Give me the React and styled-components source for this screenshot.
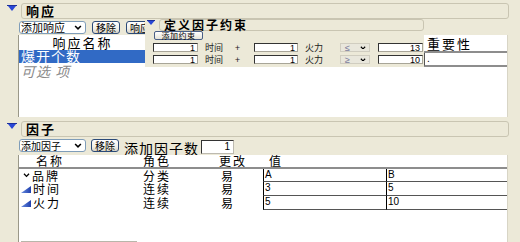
import React from 'react';
import styled, { createGlobalStyle } from 'styled-components';

const GlobalStyle = createGlobalStyle`
  html, body {
    margin: 0;
    padding: 0;
    background: #ECE9D8;
  }
  body {
    font-family: "Liberation Sans", "Noto Sans CJK SC", sans-serif;
    color: #000;
  }
`;

const cjk = `"Noto Sans CJK SC", "Liberation Sans", sans-serif`;

const Page = styled.div`
    position: relative;
    width: 520px;
    height: 242px;
    overflow: hidden;
    background: #ECE9D8;
    padding-top: 3px;
    box-sizing: border-box;
`;

const Section = styled.section`
    display: flex;
    flex-direction: column;
    margin-top: ${p => p.$top || 0}px;
`;

const HeaderRow = styled.div`
    display: flex;
    align-items: flex-start;
    padding-left: ${p => p.$indent || 7}px;
`;

const HeaderBox = styled.div`
    margin-left: 4px;
    width: ${p => p.$w}px;
    height: ${p => p.$h || 16}px;
    box-sizing: border-box;
    border: 1px solid #c9c5b2;
    border-radius: 3px;
    background: #ECE9D8;
    padding-left: 4px;
    font-family: ${cjk};
    font-weight: bold;
    font-size: ${p => p.$fs || 13}px;
    letter-spacing: 2px;
    line-height: ${p => (p.$h || 16) - 2}px;
`;

const Toolbar = styled.div`
    display: flex;
    align-items: flex-start;
    height: 13px;
    margin: 2px 0 0 19px;
`;

const Combo = styled.div`
    display: flex;
    align-items: center;
    justify-content: space-between;
    width: ${p => p.$w}px;
    height: 13px;
    box-sizing: border-box;
    border: 1px solid #7F9DB9;
    border-radius: 3px;
    background: #fff;
    padding: 0 3px 0 1px;
    font-family: ${cjk};
    font-size: ${p => p.$fs || 11}px;
    line-height: 11px;
    margin-right: ${p => p.$mr || 0}px;
    flex-shrink: 0;
`;

const Btn = styled.div`
    height: 13px;
    box-sizing: border-box;
    border: 1px solid #2b4a78;
    border-radius: 3px;
    background: linear-gradient(#ffffff, #f0efe8 60%, #d8d3c6);
    padding: 0 3px;
    font-family: ${cjk};
    font-size: ${p => p.$fs || 10}px;
    line-height: 11px;
    margin-right: ${p => p.$mr || 0}px;
    white-space: nowrap;
    flex-shrink: 0;
`;

const ToolLabel = styled.span`
    font-family: ${cjk};
    font-size: 14px;
    letter-spacing: 1px;
    line-height: 14px;
    margin-top: 2px;
    white-space: nowrap;
`;

const CountInput = styled.div`
    width: 33px;
    height: 14px;
    box-sizing: border-box;
    border-top: 1px solid #333;
    border-left: 1px solid #333;
    border-bottom: 1px solid #bdbab0;
    border-right: 1px solid #bdbab0;
    background: #fff;
    font-size: 10px;
    line-height: 12px;
    text-align: right;
    padding-right: 3px;
    margin-left: 2px;
    margin-top: 1px;
`;

/* response list */
const ListBox = styled.div`
    display: flex;
    margin: 1px 0 0 18px;
    width: 490px;
    height: 82px;
    background: #fff;
    border-left: 1px solid #9a9888;
    border-right: 1px solid #d8d5c6;
    box-sizing: border-box;
`;

const NameCol = styled.div`
    width: 127px;
    display: flex;
    flex-direction: column;
`;

const Filler = styled.div`
    flex: 1;
`;

const ColHead = styled.div`
    height: 15px;
    font-family: ${cjk};
    font-size: 13px;
    letter-spacing: 2px;
    line-height: 15px;
    text-align: ${p => p.$align || 'left'};
    padding-left: ${p => p.$pl || 0}px;
    border-bottom: ${p => (p.$line ? '2px solid #8d8d8d' : 'none')};
`;

const ListItem = styled.div`
    height: 13px;
    font-family: ${cjk};
    font-size: 14px;
    letter-spacing: 1px;
    line-height: 13px;
    padding-left: 2px;
    color: ${p => (p.$selected ? '#fff' : p.$muted ? '#8a8a8a' : '#000')};
    background: ${p => (p.$selected ? '#316AC5' : 'transparent')};
    font-style: ${p => (p.$muted ? 'italic' : 'normal')};
    margin-top: ${p => p.$mt || 0}px;
`;

const ImportanceCol = styled.div`
    width: 84px;
    display: flex;
    flex-direction: column;
    padding-top: 1px;
`;

const ImportanceCell = styled.div`
    height: 12px;
    border-left: 2px solid #555;
    border-bottom: 2px solid #8d8d8d;
    font-size: 10px;
    line-height: 12px;
    padding-left: 2px;
`;

/* floating constraint panel */
const ConstraintPanel = styled.div`
    position: absolute;
    left: 145px;
    top: 19px;
    width: 279px;
    height: 48px;
    background: #ECE9D8;
    display: flex;
    flex-direction: column;
`;

const SmallBtn = styled.div`
    width: 49px;
    height: 9px;
    box-sizing: border-box;
    margin: 0 0 0 9px;
    border: 1px solid #4a5f86;
    border-radius: 2px;
    background: linear-gradient(#fff, #e6e3d8);
    font-family: ${cjk};
    font-size: 8px;
    line-height: 7px;
    text-align: center;
    letter-spacing: 0.5px;
    white-space: nowrap;
`;

const ConstraintRows = styled.div`
    display: flex;
    flex-direction: column;
    gap: 3px;
    margin: 3px 0 0 8px;
`;

const ConstraintRow = styled.div`
    display: flex;
    align-items: center;
    height: 9px;
`;

const NumBox = styled.div`
    width: ${p => p.$w || 45}px;
    height: 9px;
    box-sizing: border-box;
    flex-shrink: 0;
    margin-left: ${p => p.$ml || 0}px;
    border-top: 1px solid #333;
    border-left: 1px solid #333;
    border-bottom: 1px solid #a8a598;
    border-right: 1px solid #a8a598;
    background: #fff;
    font-size: 9px;
    line-height: 8px;
    text-align: right;
    padding-right: 2px;
`;

const SmallText = styled.span`
    display: inline-block;
    flex-shrink: 0;
    white-space: nowrap;
    width: ${p => p.$w}px;
    margin-left: ${p => p.$ml || 0}px;
    font-family: ${cjk};
    font-size: 9px;
    line-height: 9px;
    color: #222;
`;

const OpSelect = styled.div`
    display: flex;
    align-items: center;
    justify-content: space-between;
    flex-shrink: 0;
    width: 30px;
    height: 9px;
    box-sizing: border-box;
    margin-left: ${p => p.$ml || 0}px;
    padding: 0 3px 0 4px;
    border: 1px solid #d0cdc0;
    background: #e9e7dc;
    color: #7c7c9c;
    font-size: 9px;
    line-height: 8px;
`;

/* factor table */
const FactorTable = styled.div`
    margin: 3px 0 0 18px;
    width: 490px;
    height: 88px;
    background: #fff;
    border-left: 1px solid #9a9888;
    border-right: 1px solid #d8d5c6;
    box-sizing: border-box;
    display: grid;
    grid-template-columns: 117px 75px 52px 123px 1fr;
    grid-template-rows: 12px 2px 13px 14px 14px 1fr;
`;

const HeadCell = styled.div`
    font-family: ${cjk};
    font-size: 12px;
    letter-spacing: 2px;
    line-height: 12px;
    padding-left: ${p => p.$pl || 0}px;
    white-space: nowrap;
`;

const HeadRule = styled.div`
    grid-column: 1 / -1;
    background: #8d8d8d;
`;

const Cell = styled.div`
    display: flex;
    align-items: center;
    font-family: ${cjk};
    font-size: 12px;
    letter-spacing: 2px;
    line-height: 12px;
    padding-left: ${p => p.$pl || 0}px;
    gap: 2px;
    white-space: nowrap;
`;

const ValueCell = styled.div`
    border-left: 1px solid #000;
    border-bottom: 1px solid #555;
    font-size: 10px;
    line-height: 12px;
    padding-left: 1px;
`;

const Spacer = styled.div`
    grid-column: 1 / -1;
    display: flex;
    align-items: flex-end;
`;

const BottomRule = styled.div`
    width: 116px;
    height: 1px;
    margin: 0 0 1px 2px;
    background: #b8b6aa;
`;

const Disclose = () => (
    <svg width="10" height="7" viewBox="0 0 10 7" style={{ marginTop: 2, flexShrink: 0 }}>
        <rect x="0" y="0" width="10" height="1" fill="#1c2f9c" />
        <polygon points="1,1 9,1 5,6" fill="#2a48d6" />
    </svg>
);

const SmallDisclose = () => (
    <svg width="8" height="6" viewBox="0 0 8 6" style={{ marginTop: 1, flexShrink: 0 }}>
        <rect x="0" y="0" width="8" height="1" fill="#1c2f9c" />
        <polygon points="0.5,1 7.5,1 4,5" fill="#2a48d6" />
    </svg>
);

const Chevron = ({ size = 8 }) => (
    <svg width={size} height={size * 0.6} viewBox="0 0 8 5" style={{ flexShrink: 0 }}>
        <polyline points="1,1 4,4 7,1" fill="none" stroke="#000" strokeWidth="1.6" />
    </svg>
);

const Ramp = () => (
    <svg width="10" height="7" viewBox="0 0 10 7" style={{ flexShrink: 0 }}>
        <defs>
            <linearGradient id="ramp" x1="0" x2="1" y1="0" y2="0">
                <stop offset="0" stopColor="#6a8ee0" />
                <stop offset="1" stopColor="#1f3fae" />
            </linearGradient>
        </defs>
        <polygon points="0,7 10,0 10,7" fill="url(#ramp)" />
    </svg>
);

const constraints = [
    { a: 1, b: 1, op: '≤', limit: 13 },
    { a: 1, b: 1, op: '≥', limit: 10 },
];

const factors = [
    { icon: 'chevron', name: '品牌', role: '分类', change: '易', values: ['A', 'B'] },
    { icon: 'ramp', name: '时间', role: '连续', change: '易', values: ['3', '5'] },
    { icon: 'ramp', name: '火力', role: '连续', change: '易', values: ['5', '10'] },
];

const App = () => {
    return (
        <Page>
            <GlobalStyle />

            <Section>
                <HeaderRow>
                    <Disclose />
                    <HeaderBox $w={488}>响应</HeaderBox>
                </HeaderRow>
                <Toolbar>
                    <Combo $w={67} $mr={6}>添加响应<Chevron /></Combo>
                    <Btn $mr={6}>移除</Btn>
                    <Btn>响应</Btn>
                </Toolbar>
                <ListBox>
                    <NameCol>
                        <ColHead $align="center">响应名称</ColHead>
                        <ListItem $selected>爆开个数</ListItem>
                        <ListItem $muted $mt={2}>可选 项</ListItem>
                    </NameCol>
                    <Filler />
                    <ImportanceCol>
                        <ColHead $pl={4} $line>重要性</ColHead>
                        <ImportanceCell>.</ImportanceCell>
                    </ImportanceCol>
                </ListBox>
            </Section>

            <ConstraintPanel>
                <HeaderRow $indent={2}>
                    <SmallDisclose />
                    <HeaderBox $w={267} $h={12} $fs={12}>定义因子约束</HeaderBox>
                </HeaderRow>
                <SmallBtn>添加约束</SmallBtn>
                <ConstraintRows>
                    {constraints.map((c, i) => (
                        <ConstraintRow key={i}>
                            <NumBox>{c.a}</NumBox>
                            <SmallText $ml={7} $w={20}>时间</SmallText>
                            <SmallText $ml={10} $w={6}>+</SmallText>
                            <NumBox $ml={13} $w={44}>{c.b}</NumBox>
                            <SmallText $ml={7} $w={20}>火力</SmallText>
                            <OpSelect $ml={15}>{c.op}<Chevron size={6} /></OpSelect>
                            <NumBox $ml={8}>{c.limit}</NumBox>
                        </ConstraintRow>
                    ))}
                </ConstraintRows>
            </ConstraintPanel>

            <Section $top={4}>
                <HeaderRow>
                    <Disclose />
                    <HeaderBox $w={488}>因子</HeaderBox>
                </HeaderRow>
                <Toolbar>
                    <Combo $w={67} $fs={10} $mr={5}>添加因子<Chevron /></Combo>
                    <Btn $mr={5}>移除</Btn>
                    <ToolLabel>添加因子数</ToolLabel>
                    <CountInput>1</CountInput>
                </Toolbar>
                <FactorTable>
                    <HeadCell $pl={17}>名称</HeadCell>
                    <HeadCell $pl={7}>角色</HeadCell>
                    <HeadCell $pl={8}>更改</HeadCell>
                    <HeadCell $pl={6}>值</HeadCell>
                    <HeadCell />
                    <HeadRule />
                    {factors.map(f => (
                        <React.Fragment key={f.name}>
                            <Cell $pl={f.icon === 'chevron' ? 4 : 2}>
                                {f.icon === 'chevron' ? <Chevron size={7} /> : <Ramp />}
                                {f.name}
                            </Cell>
                            <Cell $pl={7}>{f.role}</Cell>
                            <Cell $pl={10}>{f.change}</Cell>
                            {f.values.map((v, i) => (
                                <ValueCell key={i}>{v}</ValueCell>
                            ))}
                        </React.Fragment>
                    ))}
                    <Spacer><BottomRule /></Spacer>
                </FactorTable>
            </Section>
        </Page>
    );
};

export default App;
